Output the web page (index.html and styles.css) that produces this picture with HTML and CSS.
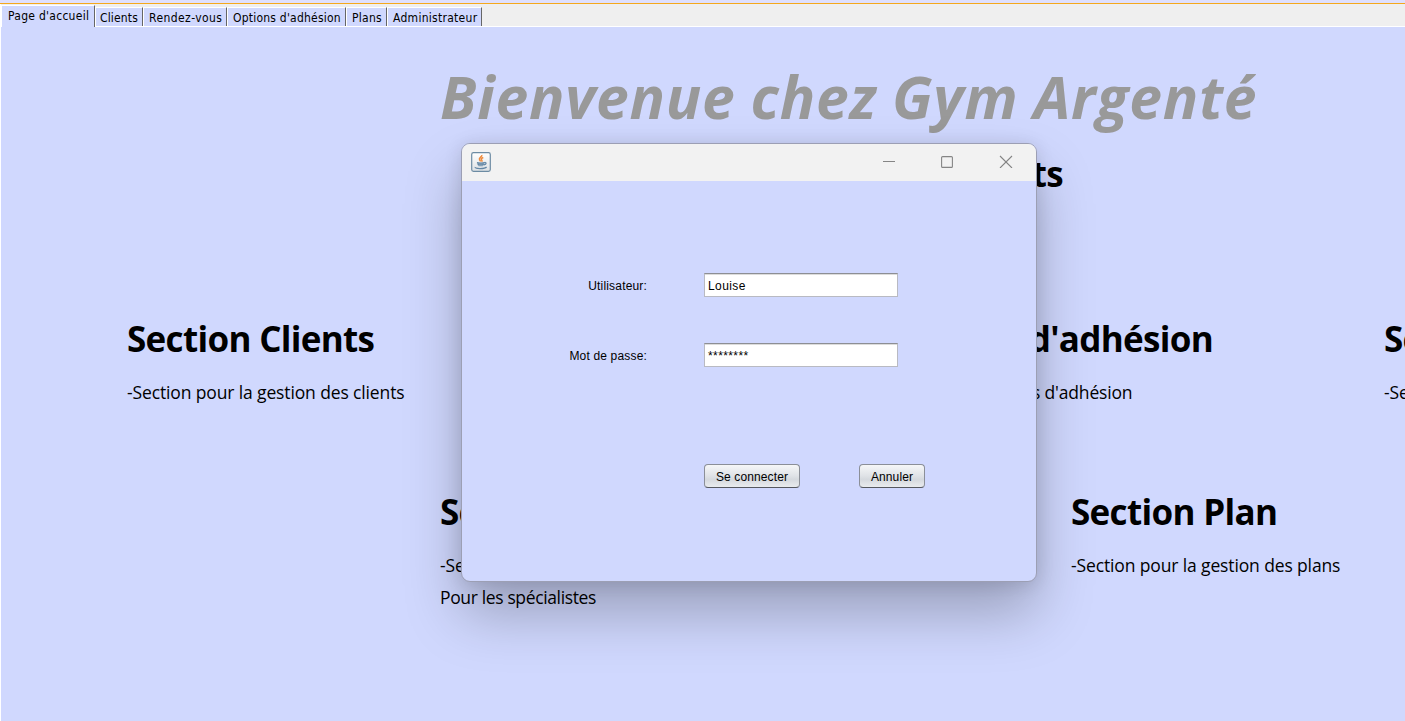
FILE: index.html
```html
<!DOCTYPE html>
<html lang="fr">
<head>
<meta charset="utf-8">
<title>Gym Argenté</title>
<link rel="stylesheet" href="styles.css">
</head>
<body>
<div class="topline"></div>
<nav class="tabs">
  <span class="tab active"><span class="t0">Page d'accueil</span></span>
  <span class="tab w1"><span>Clients</span></span>
  <span class="tab w2"><span>Rendez-vous</span></span>
  <span class="tab w3"><span>Options d'adhésion</span></span>
  <span class="tab w4"><span>Plans</span></span>
  <span class="tab w5"><span>Administrateur</span></span>
</nav>
<main class="home">
  <h1><span>Bienvenue chez Gym Argenté</span></h1>
  <h2 class="subtitle"><span>Gestion des Clients</span></h2>
  <div class="sections">
    <section class="c1"><h2><span class="s1">Section Clients</span></h2><p><span class="p1">-Section pour la gestion des clients</span></p></section>
    <section class="c3"><h2><span class="s3">Section Options d'adhésion</span></h2><p><span class="p3">-Section pour la gestion des options d'adhésion</span></p></section>
    <section class="c5"><h2><span>Section Admin</span></h2><p><span>-Section pour l'administrateur</span></p></section>
    <section class="c2 low"><h2><span>Section RDV</span></h2><p><span>-Section pour la gestion</span></p><p><span class="p2">Pour les spécialistes</span></p></section>
    <section class="c4 low"><h2><span class="s4">Section Plan</span></h2><p><span class="p4">-Section pour la gestion des plans</span></p></section>
  </div>
</main>
<div class="dialog">
  <header class="titlebar">
    <svg class="java" width="20" height="20" viewBox="0 0 20 20">
      <defs><linearGradient id="g" x2="0" y2="1"><stop stop-color="#fff"/><stop offset="1" stop-color="#dde1e4"/></linearGradient></defs>
      <rect x=".7" y=".7" width="18.6" height="18.6" rx="1.8" fill="url(#g)" stroke="#6c8ba3" stroke-width="1.2"/>
      <path d="M10.800 3c.6 1.800-3.300 2.600-2.300 4.700.3.700 1 1 1 1.800M12.300 5.500c-2.200.8-2.400 1.700-1.500 2.700.4.500.2 1-.2 1.400" fill="none" stroke="#ee8a3c" stroke-width="1.500"/>
      <path d="M5.800 10.300h7.800c-.2 1.700-.9 3.600-2 4.200H7.800c-1.100-.6-1.800-2.500-2-4.200z" fill="#a9bccb"/>
      <path d="M6 10.600c2 .7 5.500.7 7.500 0M6.800 12.400c1.500.6 4.200.6 6 0M13.500 10.500c2.200-.4 2.200 1.900-.5 2.400M4.300 15c-1.300 2 9.500 2.200 11.300 0" fill="none" stroke="#6487a5" stroke-width="1.200"/>
    </svg>
    <svg class="controls" width="132" height="14" viewBox="0 0 132 14" fill="none" stroke="#858585" stroke-width="1.100">
      <path d="M0 7.500h12"/><rect x="58.600" y="2.600" width="10.800" height="10.800" rx="1"/><path d="M117 2l12 12M129 2l-12 12"/>
    </svg>
  </header>
  <form class="login">
    <label class="l1"><span>Utilisateur:</span></label><div class="field"><span class="f1">Louise</span></div>
    <label class="l2"><span>Mot de passe:</span></label><div class="field stars"><span class="f2">********</span></div>
    <div class="actions"><button type="button" class="b1"><span>Se connecter</span></button><button type="button" class="b2"><span>Annuler</span></button></div>
  </form>
</div>
</body>
</html>
```
FILE: styles.css
```css
* { box-sizing: border-box; }
body { margin: 0; width: 1405px; height: 721px; overflow: hidden; background: #d0d8fe; color: #000; font-family: "Open Sans", "Noto Sans", sans-serif; }
.topline { height: 4px; background: #dfe0fd; border-bottom: 1px solid #f5a81c; }
.tabs { height: 23px; display: flex; align-items: flex-end; background: #efefef; border-bottom: 1px solid #fff; border-left: 1px solid #fff; font: 12px "DejaVu Sans Condensed", "DejaVu Sans", sans-serif; letter-spacing: .28px; }
.tab { height: 19px; padding: 3px 0 0 5px; background: #d0d8fe; border-top: 1px solid #fff; border-left: 1px solid #fff; border-right: 1px solid #666; line-height: 15px; white-space: nowrap; overflow: hidden; }
.active { width: 94px; height: 22px; margin-bottom: -1px; padding: 3px 0 0 6px; }
.w1 { width: 48px; padding-left: 4px; letter-spacing: .15px; } .w2 { width: 84px; letter-spacing: .42px; } .w3 { width: 119px; letter-spacing: .22px; } .w4 { width: 41px; } .w5 { width: 95px; }
.home { height: 694px; border-left: 1px solid #fff; overflow: hidden; }
h1, h2, p { margin: 0; white-space: nowrap; }
h1 { padding: 28px 0 0 439px; font-size: 58.8px; line-height: 82px; letter-spacing: .74px; word-spacing: -1px; font-style: italic; color: #999; }
h2 { font-size: 35px; line-height: 50px; letter-spacing: -.68px; }
.subtitle { width: 1062px; padding-top: 12px; text-align: right; }
.sections { display: grid; grid-template-columns: 313px 315px 316px 313px 300px; grid-template-rows: 173px 173px; padding: 115px 0 0 126px; }
section { grid-row: 1; }
.c1 { grid-column: 1; } .c2 { grid-column: 2; } .c3 { grid-column: 3; } .c4 { grid-column: 4; } .c5 { grid-column: 5; }
.low { grid-row: 2; }
p { font-size: 17.5px; line-height: 32px; letter-spacing: -.13px; }
.p2 { letter-spacing: -.36px; }
.p3 { letter-spacing: -.17px; }
section h2 { margin-bottom: 12px; }
.dialog { position: absolute; left: 461px; top: 143px; width: 576px; height: 439px; border: 1px solid #9c9fb4; border-radius: 9px; background: #d0d8fe; overflow: hidden; box-shadow: 0 32px 56px rgba(0,0,0,.25), 0 2px 18px rgba(0,0,0,.12); font-family: "Liberation Sans", Arial, sans-serif; }
.titlebar { height: 37px; padding: 8px 21px 0 9px; display: flex; justify-content: space-between; background: #f2f2f2; }
.controls { margin-top: 2px; }
.login { display: grid; grid-template-columns: 185px 194px; column-gap: 57px; grid-template-rows: 24px 24px 25px; padding-top: 92px; row-gap: 46px; font-size: 12px; line-height: 27px; }
label { text-align: right; white-space: nowrap; letter-spacing: .17px; }
.field { height: 24px; padding-left: 3px; background: #fff; border: 1px solid #b9bac2; border-top-color: #8d8e94; box-shadow: inset 0 1px #dcdcdc; line-height: 25px; letter-spacing: .4px; }
.actions { grid-column: 2; margin-top: 51px; display: flex; gap: 59px; }
button { height: 24px; padding: 1px 0 0; border: 1px solid #8b8f98; border-bottom-color: #55585f; border-radius: 4px; background: linear-gradient(#f6f7f8, #dfe2e6 50%, #d5d9de 65%, #e9ebee); font: 12px "Liberation Sans", Arial, sans-serif; letter-spacing: .12px; color: #000; flex: none; }
.b1 { width: 96px; } .b2 { width: 66px; }
```
